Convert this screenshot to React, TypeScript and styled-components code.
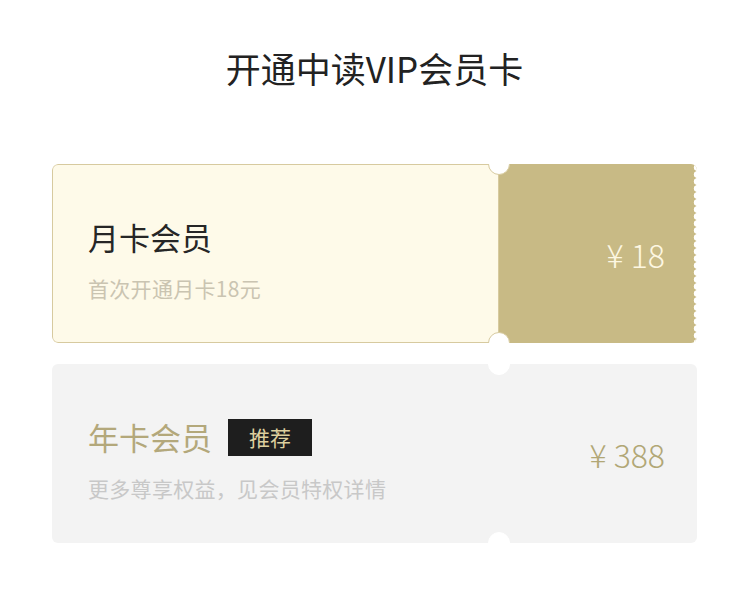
import React from 'react';
import styled, { createGlobalStyle } from 'styled-components';

const GlobalStyle = createGlobalStyle`
  body {
    margin: 0;
    background: #ffffff;
    font-family: "Noto Sans CJK SC", "Noto Sans", sans-serif;
  }
`;

const Page = styled.div`
  display: flex;
  flex-direction: column;
  padding: 0 52px;
`;

const Title = styled.h1`
  margin: 45px 0 74px;
  text-align: center;
  font-size: 35px;
  line-height: 45px;
  font-weight: 400;
  color: #222222;
`;

const CardList = styled.div`
  display: flex;
  flex-direction: column;
  gap: 21px;
`;

const Card = styled.div<{ $active: boolean }>`
  display: flex;
  height: 179px;
  border-radius: 6px;
  overflow: hidden;
  background: ${(p) => (p.$active ? 'transparent' : '#f3f3f3')};
`;

const Main = styled.div<{ $active: boolean }>`
  flex: 1;
  display: flex;
  flex-direction: column;
  padding: 52px 0 0 35px;
  border: 1px solid ${(p) => (p.$active ? '#d7ca9f' : 'transparent')};
  border-radius: 6px 0 0 6px;
  background: ${(p) => (p.$active ? '#fefae9' : 'transparent')};
`;

const NameRow = styled.div`
  display: flex;
  align-items: center;
  gap: 16px;
  height: 40px;
`;

const Name = styled.div<{ $active: boolean }>`
  font-size: 31px;
  line-height: 40px;
  color: ${(p) => (p.$active ? '#262626' : '#b3a87b')};
`;

const Badge = styled.span`
  display: flex;
  align-items: center;
  justify-content: center;
  width: 84px;
  height: 37px;
  background: #1e1e1e;
  color: #ddd09e;
  font-size: 21px;
`;

const Desc = styled.div<{ $active: boolean }>`
  margin-top: 17px;
  font-size: 21px;
  line-height: 28px;
  letter-spacing: 0.3px;
  color: ${(p) => (p.$active ? '#cac4b1' : '#c8c8c8')};
`;

const Side = styled.div<{ $active: boolean }>`
  position: relative;
  width: 198px;
  display: flex;
  align-items: center;
  justify-content: flex-end;
  padding-right: 32px;
  box-sizing: border-box;
  background: ${(p) =>
    p.$active
      ? 'radial-gradient(circle at 100% 50%, #ffffff 3px, transparent 3.6px) right top / 6px 7px repeat-y, #c8ba85'
      : 'transparent'};

  &::before,
  &::after {
    content: '';
    position: absolute;
    left: -11px;
    width: 20px;
    height: 20px;
    border-radius: 50%;
    background: #ffffff;
    border: 1px solid ${(p) => (p.$active ? '#d7ca9f' : '#ffffff')};
  }

  &::before {
    top: -11px;
  }

  &::after {
    bottom: -11px;
  }
`;

const Price = styled.div<{ $active: boolean }>`
  font-size: 32px;
  font-weight: 300;
  color: ${(p) => (p.$active ? '#fdf7e2' : '#b1a776')};
`;

const plans = [
  { name: '月卡会员', desc: '首次开通月卡18元', price: '18', active: true, tag: '' },
  { name: '年卡会员', desc: '更多尊享权益，见会员特权详情', price: '388', active: false, tag: '推荐' },
];

export default function App() {
  return (
    <>
      <GlobalStyle />
      <Page>
        <Title>开通中读VIP会员卡</Title>
        <CardList>
          {plans.map((plan) => (
            <Card key={plan.name} $active={plan.active}>
              <Main $active={plan.active}>
                <NameRow>
                  <Name $active={plan.active}>{plan.name}</Name>
                  {plan.tag && <Badge>{plan.tag}</Badge>}
                </NameRow>
                <Desc $active={plan.active}>{plan.desc}</Desc>
              </Main>
              <Side $active={plan.active}>
                <Price $active={plan.active}>¥ {plan.price}</Price>
              </Side>
            </Card>
          ))}
        </CardList>
      </Page>
    </>
  );
}
